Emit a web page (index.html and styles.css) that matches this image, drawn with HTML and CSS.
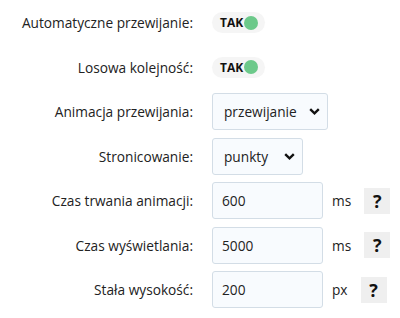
FILE: index.html
```html
<!DOCTYPE html>
<html>
<head lang="pl">
    <meta charset="UTF-8">
    <title>Ustawienia slidera</title>
    <link rel="stylesheet" href="styles.css">
</head>
<body>
    <div class="settings">
        <div class="row">
            <label class="label">Automatyczne przewijanie:</label>
            <div class="field">
                <span class="toggle">TAK<i class="dot"></i></span>
            </div>
        </div>
        <div class="row">
            <label class="label">Losowa kolejność:</label>
            <div class="field">
                <span class="toggle">TAK<i class="dot"></i></span>
            </div>
        </div>
        <div class="row">
            <label class="label">Animacja przewijania:</label>
            <div class="field">
                <div class="select wide">
                    <span>przewijanie</span>
                    <svg width="11" height="7" viewBox="0 0 11 7"><path d="M1.2 1.2 L5.5 5.3 L9.8 1.2" fill="none" stroke="#111" stroke-width="2.4"/></svg>
                </div>
            </div>
        </div>
        <div class="row">
            <label class="label">Stronicowanie:</label>
            <div class="field">
                <div class="select narrow">
                    <span>punkty</span>
                    <svg width="11" height="7" viewBox="0 0 11 7"><path d="M1.2 1.2 L5.5 5.3 L9.8 1.2" fill="none" stroke="#111" stroke-width="2.4"/></svg>
                </div>
            </div>
        </div>
        <div class="row">
            <label class="label">Czas trwania animacji:</label>
            <div class="field">
                <input class="input" type="text" value="600">
                <span class="unit">ms</span>
                <span class="help">?</span>
            </div>
        </div>
        <div class="row">
            <label class="label">Czas wyświetlania:</label>
            <div class="field">
                <input class="input" type="text" value="5000">
                <span class="unit">ms</span>
                <span class="help">?</span>
            </div>
        </div>
        <div class="row">
            <label class="label">Stała wysokość:</label>
            <div class="field">
                <input class="input" type="text" value="200">
                <span class="unit">px</span>
                <span class="help">?</span>
            </div>
        </div>
    </div>
</body>
</html>
```

FILE: styles.css
```css
*{
    margin: 0;
    padding: 0;
    box-sizing: border-box;
}
body{
    font-family: "Open Sans", "Noto Sans", sans-serif;
    color: #222;
    background: #fff;
}
.settings{
    display: flex;
    flex-direction: column;
    gap: 7.5px;
    padding-top: 4px;
}
.row{
    display: grid;
    grid-template-columns: 193px auto;
    column-gap: 19px;
    align-items: center;
    min-height: 37px;
}
.label{
    text-align: right;
    font-size: 13.7px;
}
.field{
    display: flex;
    align-items: center;
}
.toggle{
    display: inline-flex;
    align-items: center;
    height: 21px;
    width: 53px;
    padding-left: 8px;
    border-radius: 11px;
    background: #f5f5f5;
    font-size: 12px;
    font-weight: bold;
    color: #111;
}
.dot{
    width: 14px;
    height: 14px;
    border-radius: 50%;
    background: #6cc98a;
    margin-left: 1px;
}
.select, .input{
    height: 37px;
    border: 1px solid #d3dde6;
    border-radius: 3px;
    background: #f8fbfe;
    font-family: inherit;
    font-size: 13.7px;
    color: #222;
}
.select{
    display: flex;
    align-items: center;
    justify-content: space-between;
    padding: 0 7px 0 11px;
}
.select.wide{
    width: 116px;
}
.select.narrow{
    width: 91px;
}
.input{
    width: 111px;
    padding-left: 9px;
    outline: none;
}
.unit{
    font-size: 13.7px;
    margin-left: 9px;
}
.help{
    display: flex;
    align-items: center;
    justify-content: center;
    width: 26px;
    height: 26px;
    margin-left: 13px;
    background: #efefef;
    font-size: 18px;
    font-weight: bold;
    color: #111;
}
```
